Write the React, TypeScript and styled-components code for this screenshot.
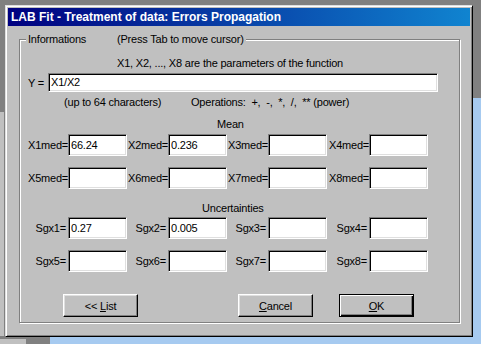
import React from "react";
import styled, { createGlobalStyle } from "styled-components";

const Global = createGlobalStyle`
  html, body { margin: 0; padding: 0; }
  body {
    width: 481px; height: 344px; overflow: hidden;
    font-family: "Liberation Sans", Arial, sans-serif;
    font-size: 11px;
    letter-spacing: -0.2px;
  }
`;

const Desktop = styled.div`
  width: 481px;
  height: 344px;
  box-sizing: border-box;
  padding: 5px;
  background:
    linear-gradient(#a6caf0, #a6caf0) right bottom / 8px 246px no-repeat,
    linear-gradient(#a6caf0, #a6caf0) right bottom / 431px 7px no-repeat,
    linear-gradient(#c0c0c0, #c0c0c0) left 112px / 4px 224px no-repeat,
    linear-gradient(#c0c0c0, #c0c0c0) left bottom / 26px 5px no-repeat,
    #808080;
`;

const Window = styled.div`
  width: 468px;
  height: 332px;
  box-sizing: border-box;
  background: #c0c0c0;
  border: 1px solid;
  border-color: #dfdfdf #000 #000 #dfdfdf;
  box-shadow: inset 1px 1px 0 #fff, inset -1px -1px 0 #808080;
  padding: 2px;
  display: flex;
  flex-direction: column;
`;

const TitleBar = styled.div`
  height: 18px;
  display: flex;
  align-items: center;
  padding-left: 3px;
  background: linear-gradient(90deg, #000080, #1084d0);
  color: #fff;
  font-weight: bold;
  font-size: 12px;
  letter-spacing: 0;
`;

const Group = styled.fieldset`
  margin: 7px 0 0 11px;
  padding: 0;
  width: 441px;
  height: 290px;
  box-sizing: border-box;
  border: 1px solid #808080;
  box-shadow: 1px 1px 0 #fff, inset 1px 1px 0 #fff;
  min-width: 0;
`;

const Legend = styled.legend`
  margin-left: 6px;
  padding: 0 2px;
  line-height: 13px;
  background: #c0c0c0;
  color: #000;
`;

const LegendPart = styled.span<{ $w?: number }>`
  display: inline-block;
  width: ${(p) => (p.$w ? `${p.$w}px` : "auto")};
`;

const TextLine = styled.div<{ $top: number; $left: number }>`
  margin-top: ${(p) => p.$top}px;
  padding-left: ${(p) => p.$left}px;
  line-height: 13px;
  height: 13px;
  color: #000;
  white-space: nowrap;
  display: flex;
`;

const Span = styled.span<{ $w?: number }>`
  display: inline-block;
  width: ${(p) => (p.$w ? `${p.$w}px` : "auto")};
`;

const Row = styled.div<{ $top: number; $left: number }>`
  margin-top: ${(p) => p.$top}px;
  padding-left: ${(p) => p.$left}px;
  display: flex;
  align-items: center;
`;

const FieldLabel = styled.span<{ $w: number; $pad?: number }>`
  width: ${(p) => p.$w}px;
  box-sizing: border-box;
  padding-right: ${(p) => p.$pad ?? 0}px;
  text-align: right;
  color: #000;
  white-space: nowrap;
`;

const TextBox = styled.input<{ $w: number; $h: number }>`
  width: ${(p) => p.$w}px;
  height: ${(p) => p.$h}px;
  box-sizing: border-box;
  margin: 0;
  padding: 0 0 1px 2px;
  background: #fff;
  border: 1px solid;
  border-color: #808080 #fff #fff #808080;
  box-shadow: inset 1px 1px 0 #000, inset -1px -1px 0 #dfdfdf;
  font-family: "Liberation Sans", Arial, sans-serif;
  font-size: 11px;
  letter-spacing: -0.2px;
  color: #000;
  outline: none;
`;

const Grid = styled.div<{ $top: number }>`
  margin-top: ${(p) => p.$top}px;
  margin-left: 8px;
  display: grid;
  grid-template-columns: 100px 100px 101px 100px;
  row-gap: 11px;
`;

const Cell = styled.div`
  display: flex;
  align-items: center;
`;

const ButtonRow = styled.div`
  margin-top: 22px;
  padding-left: 43px;
  display: flex;
  align-items: center;
`;

const Button = styled.button<{ $gap?: number; $default?: boolean }>`
  width: 75px;
  height: 23px;
  margin: 0 0 0 ${(p) => p.$gap ?? 0}px;
  padding: 0;
  box-sizing: border-box;
  background: #c0c0c0;
  font-family: "Liberation Sans", Arial, sans-serif;
  font-size: 11px;
  letter-spacing: -0.2px;
  color: #000;
  border: 1px solid;
  border-color: ${(p) => (p.$default ? "#000" : "#fff #000 #000 #fff")};
  box-shadow: ${(p) =>
    p.$default
      ? "inset 1px 1px 0 #fff, inset -1px -1px 0 #000, inset -2px -2px 0 #808080"
      : "inset -1px -1px 0 #808080, inset 1px 1px 0 #dfdfdf"};
`;

const means = [
  ["X1med=", "66.24"],
  ["X2med=", "0.236"],
  ["X3med=", ""],
  ["X4med=", ""],
  ["X5med=", ""],
  ["X6med=", ""],
  ["X7med=", ""],
  ["X8med=", ""],
];

const sgx = [
  ["Sgx1=", "0.27"],
  ["Sgx2=", "0.005"],
  ["Sgx3=", ""],
  ["Sgx4=", ""],
  ["Sgx5=", ""],
  ["Sgx6=", ""],
  ["Sgx7=", ""],
  ["Sgx8=", ""],
];

export default function App() {
  return (
    <>
      <Global />
      <Desktop>
        <Window>
          <TitleBar>LAB Fit - Treatment of data: Errors Propagation</TitleBar>
          <Group>
            <Legend>
              <LegendPart $w={89}>Informations</LegendPart>
              <LegendPart>(Press Tab to move cursor)</LegendPart>
            </Legend>
            <TextLine $top={11} $left={97}>
              X1, X2, ..., X8 are the parameters of the function
            </TextLine>
            <Row $top={3} $left={7}>
              <FieldLabel $w={21} $pad={4}>Y =</FieldLabel>
              <TextBox $w={390} $h={19} defaultValue="X1/X2" readOnly />
            </Row>
            <TextLine $top={4} $left={44}>
              <Span $w={127}>(up to 64 characters)</Span>
              <Span>Operations:&nbsp; +,&nbsp; -,&nbsp; *,&nbsp; /,&nbsp; ** (power)</Span>
            </TextLine>
            <TextLine $top={9} $left={197}>Mean</TextLine>
            <Grid $top={3}>
              {means.map(([l, v]) => (
                <Cell key={l}>
                  <FieldLabel $w={40}>{l}</FieldLabel>
                  <TextBox $w={59} $h={22} defaultValue={v} readOnly />
                </Cell>
              ))}
            </Grid>
            <TextLine $top={13} $left={182}>Uncertainties</TextLine>
            <Grid $top={2}>
              {sgx.map(([l, v]) => (
                <Cell key={l}>
                  <FieldLabel $w={40} $pad={2}>{l}</FieldLabel>
                  <TextBox $w={59} $h={22} defaultValue={v} readOnly />
                </Cell>
              ))}
            </Grid>
            <ButtonRow>
              <Button>&lt;&lt; <u>L</u>ist</Button>
              <Button $gap={100}><u>C</u>ancel</Button>
              <Button $gap={26} $default><u>O</u>K</Button>
            </ButtonRow>
          </Group>
        </Window>
      </Desktop>
    </>
  );
}
